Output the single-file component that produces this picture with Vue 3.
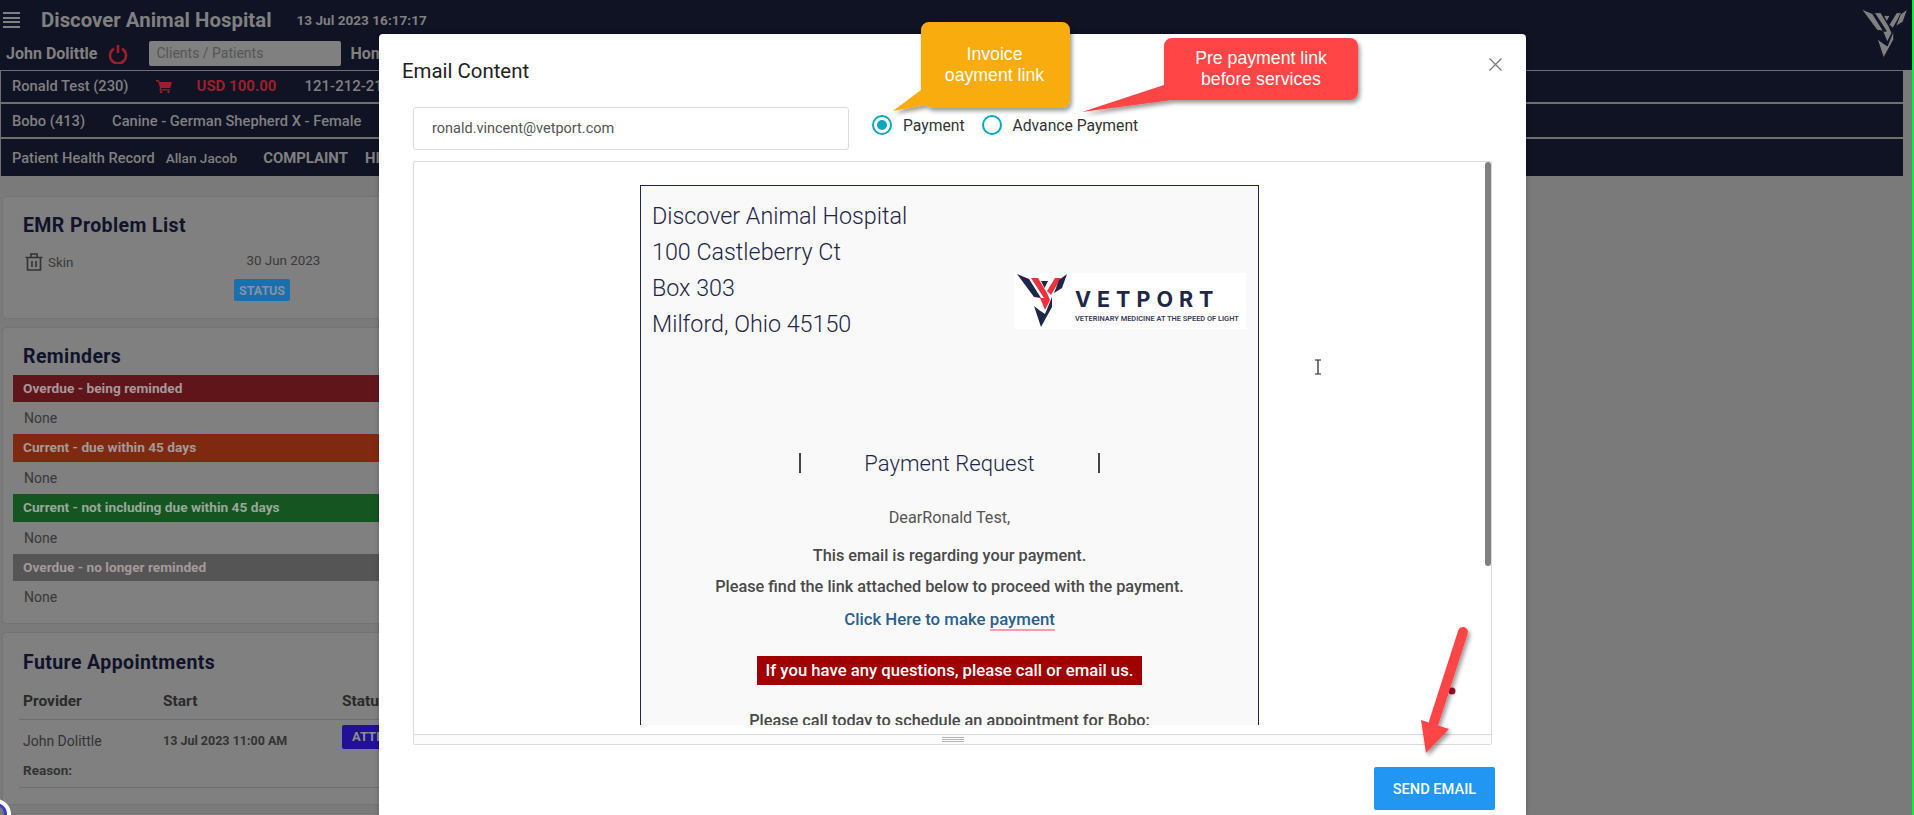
<template>
  <div class="screen">
    <!-- page behind the modal, colours already dimmed by the backdrop -->
    <header class="topbar">
      <div class="brand-row">
        <span class="burger"><i></i><i></i><i></i><i></i></span>
        <span class="hospital">Discover Animal Hospital</span>
        <span class="clock">13 Jul 2023 16:17:17</span>
      </div>
      <div class="user-row">
        <span class="user">John Dolittle</span>
        <svg class="power" viewBox="0 0 20 20" width="20" height="20">
          <path d="M6 4.6a8 8 0 1 0 8 0" fill="none" stroke="#9c1f2c" stroke-width="2.6" />
          <path d="M10 1v8" stroke="#9c1f2c" stroke-width="2.6" />
        </svg>
        <span class="search">Clients / Patients</span>
        <span class="home">Home</span>
      </div>
      <svg class="mark" viewBox="0 0 50 54" width="47" height="50">
        <polygon v-for="p in markParts" :key="p.pts" :points="p.pts" fill="#808080" stroke="#0f1324" stroke-width="1" />
      </svg>
    </header>

    <section class="strip strip-first">
      <span class="owner">Ronald Test (230)</span>
      <svg class="cart" viewBox="0 0 16 14" width="16" height="14">
        <path d="M0 1h3l.6 2H16l-1.8 6H5.2l-.3 1.2H14v1.3H3.2L4 9 2.2 2.4H0z" fill="#9c1f2c" />
        <circle cx="5" cy="13" r="1.2" fill="#9c1f2c" />
        <circle cx="12.5" cy="13" r="1.2" fill="#9c1f2c" />
      </svg>
      <span class="balance">USD 100.00</span>
      <span class="phone">121-212-2121</span>
    </section>
    <section class="strip strip-pet">
      <span class="pet">Bobo (413)</span>
      <span class="breed">Canine - German Shepherd X - Female</span>
    </section>
    <section class="strip strip-record">
      <span class="record">Patient Health Record</span>
      <span class="vet">Allan Jacob</span>
      <span class="tab">COMPLAINT</span>
      <span class="tab">HISTORY</span>
    </section>

    <main class="cards">
      <article class="card card-emr">
        <h2>EMR Problem List</h2>
        <div class="problem">
          <svg viewBox="0 0 18 18" width="18" height="18" class="trash">
            <path d="M0.5 4.5h17M2.5 4.5v12.5h13V4.5M6 4.5V1h6v3.5M7 8v6M11 8v6" fill="none" stroke="#333" stroke-width="1.6" />
          </svg>
          <span class="skin">Skin</span>
          <span class="problem-date">30 Jun 2023</span>
        </div>
        <span class="status">STATUS</span>
      </article>

      <article class="card card-rem">
        <h2>Reminders</h2>
        <div v-for="r in reminders" :key="r.label" class="rem-group">
          <div class="rem-bar" :class="r.tone">{{ r.label }}</div>
          <div class="rem-none">None</div>
        </div>
      </article>

      <article class="card card-appt">
        <h2>Future Appointments</h2>
        <div class="appt-grid appt-head">
          <span>Provider</span><span>Start</span><span>Status</span>
        </div>
        <div class="appt-grid appt-row">
          <span class="appt-name">John Dolittle</span>
          <span class="appt-start">13 Jul 2023 11:00 AM</span>
          <span class="appt-badge">ATTENDED</span>
        </div>
        <div class="appt-reason">Reason:</div>
      </article>
      <article class="card card-tail"></article>
    </main>

    <!-- email modal -->
    <div class="modal">
      <div class="modal-head">
        <span class="modal-title">Email Content</span>
        <svg class="close" viewBox="0 0 12 12" width="13" height="13">
          <path d="M.5.5l11 11M11.5.5l-11 11" stroke="#777" stroke-width="1.1" />
        </svg>
      </div>
      <div class="controls">
        <div class="email-input">ronald.vincent@vetport.com</div>
        <label class="radio"><span class="dot on"></span>Payment</label>
        <label class="radio"><span class="dot"></span>Advance Payment</label>
      </div>
      <div class="editor">
        <div class="editor-body">
          <div class="mail">
            <div class="mail-head">
              <div class="address">
                <div>Discover Animal Hospital</div>
                <div>100 Castleberry Ct</div>
                <div>Box 303</div>
                <div>Milford, Ohio 45150</div>
              </div>
              <div class="logo">
                <svg viewBox="0 0 50 54" width="50" height="54">
                  <polygon v-for="p in markParts" :key="p.pts" :points="p.pts" :fill="p.red ? '#e8323c' : '#1f2748'" />
                </svg>
                <div class="logo-text">
                  <div class="logo-name">VETPORT</div>
                  <div class="logo-tag">VETERINARY MEDICINE AT THE SPEED OF LIGHT</div>
                </div>
              </div>
            </div>
            <div class="request"><i></i><span>Payment Request</span><i></i></div>
            <p class="dear">DearRonald Test,</p>
            <p class="line line-a">This email is regarding your payment.</p>
            <p class="line line-b">Please find the link attached below to proceed with the payment.</p>
            <p class="line line-c pay-link">Click Here to make <span class="spell">payment</span></p>
            <div class="notice-wrap"><span class="notice">If you have any questions, please call or email us.</span></div>
            <p class="line line-d">Please call today to schedule an appointment for Bobo:</p>
          </div>
          <span class="scroll-thumb"></span>
        </div>
        <div class="editor-status"><span class="grip"></span></div>
      </div>
      <div class="modal-foot">
        <button class="send">SEND EMAIL</button>
      </div>
    </div>

    <!-- annotations drawn on top of the screenshot -->
    <svg class="notes" width="1914" height="815" viewBox="0 0 1914 815">
      <defs>
        <filter id="drop" x="-20%" y="-20%" width="140%" height="140%">
          <feDropShadow dx="2" dy="3" stdDeviation="2" flood-color="#000" flood-opacity="0.4" />
        </filter>
      </defs>
      <circle cx="1452" cy="691" r="3.5" fill="#a80f30" />
      <g filter="url(#drop)">
        <path d="M929 22h133a8 8 0 0 1 8 8v70a8 8 0 0 1-8 8H933a8 8 0 0 1-7-3l-33 6 28-21V30a8 8 0 0 1 8-8z" fill="#f8ac09" />
        <path d="M1172 38h178a8 8 0 0 1 8 8v46a8 8 0 0 1-8 8H1172L1082 112 1164 85V46a8 8 0 0 1 8-8z" fill="#ff4444" />
        <path d="M1463 632L1434 722" stroke="#ff4444" stroke-width="10" stroke-linecap="round" />
        <polygon points="1421,720 1449,729 1426,753" fill="#ff4444" />
      </g>
      <path d="M1315 360h6M1318 360v14M1315 374h6" stroke="#222" stroke-width="1.2" fill="none" />
    </svg>
    <div class="note note-amber">Invoice<br />oayment link</div>
    <div class="note note-red">Pre payment link<br />before services</div>

    <span class="corner-badge"></span>
    <span class="edge"></span>
  </div>
</template>

<script setup>
const markParts = [
  { pts: '0,1 12,6 24,25 17,24' },
  { pts: '14,5 21,5 30,20 33,27 28,37 23,25 27,25', red: true },
  { pts: '30,18 38,5 44,5 34,22', red: true },
  { pts: '24,8 31,8 27.5,15' },
  { pts: '50,1 45,15 37,20 42,7' },
  { pts: '17,33 24,54 35,34 35,24 28,41 22,37' }
]

const reminders = [
  { label: 'Overdue - being reminded', tone: 'tone-red' },
  { label: 'Current - due within 45 days', tone: 'tone-orange' },
  { label: 'Current - not including due within 45 days', tone: 'tone-green' },
  { label: 'Overdue - no longer reminded', tone: 'tone-grey' }
]
</script>

<style>
html, body { margin: 0; background: #7a7a7a; overflow: hidden; }
</style>

<style scoped>
.screen {
  position: relative;
  width: 1914px;
  height: 815px;
  overflow: hidden;
  background: #7a7a7a;
  font-family: Roboto, "Liberation Sans", sans-serif;
}
/* top bar */
.topbar {
  position: relative;
  height: 70px;
  width: 1912px;
  background: #0f1324;
  box-sizing: border-box;
  padding-top: 9px;
}
.brand-row { display: flex; align-items: center; height: 22px; color: #808080; }
.burger { display: flex; flex-direction: column; gap: 2.5px; margin-left: 3px; width: 17px; }
.burger i { display: block; height: 2px; background: #808080; }
.hospital { margin-left: 21px; font-size: 20.4px; font-weight: 700; }
.clock { margin-left: 25px; font-size: 13.6px; font-weight: 700; }
.user-row { display: flex; align-items: center; height: 25px; margin-top: 10px; color: #808080; }
.user { margin-left: 6px; font-size: 16px; font-weight: 700; }
.power { margin-left: 11px; }
.search {
  margin-left: 21px;
  width: 192px;
  height: 25px;
  box-sizing: border-box;
  padding-left: 7px;
  line-height: 25px;
  background: #808080;
  border-radius: 2px;
  color: #555;
  font-size: 14px;
}
.home { margin-left: 9px; font-size: 16px; font-weight: 700; }
.mark { position: absolute; right: 4px; top: 8px; }

/* info strips */
.strip {
  display: flex;
  align-items: center;
  width: 1903px;
  box-sizing: border-box;
  background: #0f1324;
  border-left: 1px solid #6f6f6f;
  color: #808080;
}
.strip-first { height: 34px; padding-bottom: 1px; border-top: 1px solid #6f6f6f; border-bottom: 2px solid #6f6f6f; }
.strip-pet { height: 35px; border-bottom: 2px solid #6f6f6f; }
.strip-record { height: 37px; }
.owner, .pet { margin-left: 11px; font-size: 14.7px; font-weight: 500; }
.cart { margin-left: 27px; }
.balance { margin-left: 25px; font-size: 15px; font-weight: 700; color: #9c1f2c; }
.phone { margin-left: 28px; font-size: 15px; font-weight: 500; }
.breed { margin-left: 27px; font-size: 14.7px; font-weight: 500; }
.record { margin-left: 11px; font-size: 14.6px; font-weight: 500; }
.vet { margin-left: 11px; font-size: 13.6px; font-weight: 500; }
.tab { margin-left: 26px; font-size: 14.9px; font-weight: 700; }
.tab + .tab { margin-left: 17px; }

/* cards */
.cards { display: flex; flex-direction: column; gap: 8px; padding: 20px 0 0 2px; }
.card {
  box-sizing: border-box;
  width: 720px;
  background: #808080;
  border: 1px solid #747474;
  border-radius: 4px;
  color: #333;
}
.card h2 {
  margin: 0;
  font-size: 19.5px;
  line-height: 23px;
  font-weight: 700;
  letter-spacing: 0.4px;
  color: #10132a;
}
.card-emr { height: 123px; padding: 17px 20px 0; }
.problem { position: relative; display: flex; align-items: center; margin-top: 16px; font-size: 13.4px; }
.trash { margin-left: 2px; }
.skin { margin-left: 5px; color: #3a3a3a; }
.problem-date { margin-left: 173px; margin-top: -4px; color: #3a3a3a; }
.status {
  display: inline-block;
  margin: 8px 0 0 211px;
  width: 56px;
  height: 22px;
  line-height: 23px;
  text-align: center;
  border-radius: 2px;
  background: #1b6fae;
  color: #8593a0;
  font-size: 12.5px;
  font-weight: 700;
}
.card-rem { height: 297px; padding: 17px 0 0 10px; }
.card-rem h2 { margin-left: 10px; margin-bottom: 7px; }
.rem-group { width: 700px; }
.rem-bar {
  height: 27px;
  line-height: 26px;
  padding-left: 10px;
  font-size: 13.7px;
  font-weight: 700;
  color: #a39a9a;
}
.tone-red { background: #60151a; }
.tone-orange { background: #7f2a10; height: 28px; }
.tone-green { background: #155522; height: 28px; color: #9aa89a; }
.tone-grey { background: #555; }
.rem-none { height: 32px; line-height: 32px; padding-left: 11px; font-size: 14px; color: #383838; }
.card-appt { height: 173px; padding: 18px 0 0 20px; }
.appt-grid { display: grid; grid-template-columns: 140px 179px 1fr; align-items: center; }
.appt-head {
  margin: 9px 0 0 -4px;
  padding-left: 4px;
  height: 36px;
  border-bottom: 1px solid #6e6e6e;
  font-size: 15.5px;
  font-weight: 700;
  color: #2a2a2a;
}
.appt-row { height: 41px; font-size: 14px; color: #333; }
.appt-start { font-size: 12.5px; font-weight: 700; }
.appt-badge {
  justify-self: start;
  align-self: start;
  margin-top: 5px;
  height: 24px;
  line-height: 24px;
  padding: 0 10px;
  border-radius: 2px;
  background: #22109a;
  color: #8e8e8e;
  font-size: 13px;
  font-weight: 700;
}
.appt-reason {
  margin-left: -4px;
  padding-left: 4px;
  height: 26px;
  line-height: 18px;
  border-bottom: 1px solid #6e6e6e;
  font-size: 13.5px;
  font-weight: 700;
}
.card-tail { height: 20px; }

/* modal */
.modal {
  position: absolute;
  left: 379px;
  top: 34px;
  width: 1147px;
  height: 781px;
  background: #fff;
  border-radius: 4px 4px 0 0;
  box-shadow: 0 0 4px rgba(0, 0, 0, 0.25);
}
.modal-head {
  display: flex;
  align-items: center;
  justify-content: space-between;
  height: 73px;
  padding: 0 24px 0 23px;
  box-sizing: border-box;
}
.modal-title { font-size: 20.4px; color: #222; }
.close { margin-top: -12px; }
.controls { display: flex; align-items: flex-start; margin-left: 34px; height: 43px; }
.email-input {
  box-sizing: border-box;
  width: 436px;
  height: 43px;
  line-height: 41px;
  padding-left: 18px;
  border: 1px solid #dcdcdc;
  border-radius: 3px;
  font-size: 14.5px;
  color: #555;
}
.radio {
  display: flex;
  align-items: center;
  height: 20px;
  margin: 8px 0 0 23px;
  font-size: 15.7px;
  color: #333;
}
.radio + .radio { margin-left: 17px; }
.dot {
  position: relative;
  box-sizing: border-box;
  width: 20px;
  height: 20px;
  margin-right: 11px;
  border: 2px solid #0aa7bf;
  border-radius: 50%;
}
.dot.on::after {
  content: "";
  position: absolute;
  left: 3px;
  top: 3px;
  width: 10px;
  height: 10px;
  border-radius: 50%;
  background: #0aa7bf;
}
.editor {
  box-sizing: border-box;
  width: 1079px;
  height: 584px;
  margin: 11px 0 0 34px;
  border: 1px solid #dcdcdc;
  border-radius: 2px;
  display: flex;
  flex-direction: column;
}
.editor-body { position: relative; height: 564px; overflow: hidden; padding-top: 23px; box-sizing: border-box; }
.scroll-thumb {
  position: absolute;
  right: 0;
  top: 0;
  width: 6px;
  height: 404px;
  border-radius: 3px;
  background: #808080;
}
.editor-status {
  display: flex;
  align-items: center;
  justify-content: center;
  margin-top: 9px;
  height: 9px;
  flex: none;
  border-top: 1px solid #dcdcdc;
  background: #fcfcfc;
}
.grip {
  width: 22px;
  height: 5px;
  box-sizing: border-box;
  border-top: 1px solid #b5b5b5;
  border-bottom: 1px solid #b5b5b5;
  background: linear-gradient(#fcfcfc 0 1px, #b5b5b5 1px 2px, #fcfcfc 2px);
}
.mail {
  box-sizing: border-box;
  width: 619px;
  margin-left: 226px;
  padding-top: 12px;
  background: #f9f9f9;
  border: 1px solid #1f2748;
  min-height: 700px;
}
.mail-head { position: relative; display: flex; justify-content: space-between; height: 144px; }
.address { margin-left: 11px; font-size: 23.3px; font-weight: 300; line-height: 36px; color: #1f2748; }
.logo {
  display: flex;
  width: 232px;
  height: 56px;
  margin: 75px 12px 0 0;
  background: #fff;
  box-sizing: border-box;
  padding: 0 0 0 3px;
}
.logo-text { margin-left: 8px; color: #1f2748; }
.logo-name { margin-top: 14px; font-size: 21.5px; line-height: 24px; font-weight: 700; letter-spacing: 6px; font-family: Inter, sans-serif; }
.logo-tag { margin-top: 3px; font-size: 7.4px; line-height: 9px; font-weight: 600; white-space: nowrap; color: #3a4160; }
.request {
  display: flex;
  align-items: center;
  justify-content: space-between;
  width: 301px;
  height: 30px;
  margin: 106px auto 0;
  font-size: 22px;
  font-weight: 300;
  color: #1f2748;
}
.request i { width: 2px; height: 20px; background: #444; }
.mail p { margin: 0; text-align: center; line-height: 22px; }
.mail .dear { margin-top: 29px; font-size: 16.2px; color: #555; }
.line { font-size: 16.3px; font-weight: 500; color: #4a4a4a; }
.mail .line-a { margin-top: 16px; }
.mail .line-b { margin-top: 9px; }
.mail .line-c { margin-top: 10px; }
.mail .line-d { margin-top: 25px; }
.pay-link { color: #2b5f8c; font-size: 16.8px; }
.spell { border-bottom: 2px solid #ff9ab0; }
.notice-wrap { margin-top: 26px; text-align: center; height: 29px; }
.notice {
  display: inline-block;
  height: 29px;
  line-height: 29px;
  padding: 0 9px;
  background: #a00000;
  color: #fff;
  font-size: 16.7px;
  font-weight: 500;
}
.modal-foot { display: flex; justify-content: flex-end; padding: 22px 31px 0 0; }
.send {
  width: 121px;
  height: 43px;
  border: 0;
  border-radius: 2px;
  background: #2196f3;
  color: #fff;
  font-family: inherit;
  font-size: 14.6px;
  font-weight: 500;
}

/* annotations */
.notes { position: absolute; left: 0; top: 0; pointer-events: none; }
.note {
  position: absolute;
  color: #fff;
  text-align: center;
  font-family: "Liberation Sans", Arial, sans-serif;
  font-size: 17.7px;
  line-height: 21px;
}
.note-amber { left: 922px; top: 44px; width: 145px; }
.note-red { left: 1164px; top: 48px; width: 194px; }
.corner-badge {
  position: absolute;
  left: -15px;
  top: 803px;
  width: 22px;
  height: 22px;
  box-sizing: border-box;
  border: 3px solid #3a3ad0;
  outline: 4px solid #fff;
  border-radius: 50%;
}
.edge { position: absolute; right: 0; top: 0; width: 2px; height: 815px; background: #00f53c; }
</style>
